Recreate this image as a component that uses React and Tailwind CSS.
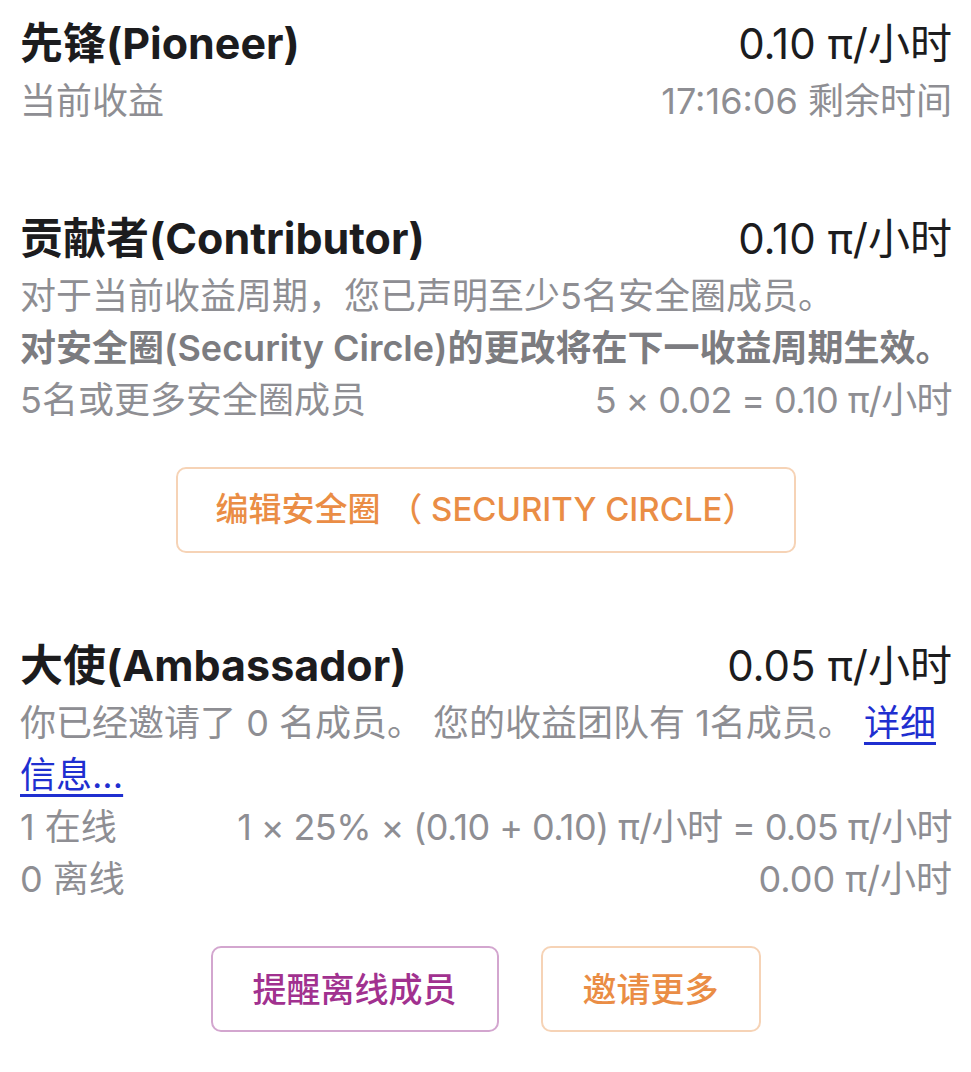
import React from 'react';

const font = { fontFamily: '"Inter", "Noto Sans CJK SC", sans-serif' };

function TitleRow({ title, value }) {
  return (
    <div className="flex items-center justify-between h-[64px]">
      <span className="text-[43px] font-bold text-[#1c1c1e]">{title}</span>
      <span className="text-[42px] text-[#1c1c1e]">{value}</span>
    </div>
  );
}

function InfoRow({ left, right, tight }) {
  return (
    <div className="flex items-center justify-between h-[52px] text-[36px] text-[#8e8e93]">
      <span>{left}</span>
      <span className={tight ? 'tracking-[-0.6px]' : ''}>{right}</span>
    </div>
  );
}

export default function App() {
  return (
    <div className="w-[971px] h-[1072px] bg-white pl-[20px] pr-[19px] pt-[11px]" style={font}>
      {/* Pioneer */}
      <TitleRow title="先锋(Pioneer)" value="0.10 π/小时" />
      <InfoRow left="当前收益" right="17:16:06 剩余时间" />

      {/* Contributor */}
      <div className="mt-[79px]">
        <TitleRow title="贡献者(Contributor)" value="0.10 π/小时" />
        <div className="h-[52px] leading-[52px] text-[36px] text-[#8e8e93]">
          对于当前收益周期，您已声明至少5名安全圈成员。
        </div>
        <div className="h-[52px] leading-[52px] text-[36px] font-semibold text-[#7c7c80] whitespace-nowrap">
          对安全圈(Security Circle)的更改将在下一收益周期生效。
        </div>
        <InfoRow left="5名或更多安全圈成员" right="5 × 0.02 = 0.10 π/小时" tight />
        <div className="flex justify-center mt-[41px] pr-[1px]">
          <button className="w-[620px] h-[86px] rounded-[10px] border-2 border-[#f6d3b6] text-[33px] font-medium text-[#ea8d45]">
            编辑安全圈 （ SECURITY CIRCLE）
          </button>
        </div>
      </div>

      {/* Ambassador */}
      <div className="mt-[80px]">
        <TitleRow title="大使(Ambassador)" value="0.05 π/小时" />
        <div className="leading-[52px] text-[36px] text-[#8e8e93]">
          你已经邀请了 0 名成员。 您的收益团队有 1名成员。{' '}
          <a href="#" className="text-[#1f2fd0] underline underline-offset-[6px]">
            详细信息...
          </a>
        </div>
        <InfoRow left="1 在线" right="1 × 25% × (0.10 + 0.10) π/小时 = 0.05 π/小时" tight />
        <InfoRow left="0 离线" right="0.00 π/小时" />
        <div className="flex justify-center gap-[42px] mt-[41px] pr-[1px]">
          <button className="w-[288px] h-[86px] rounded-[10px] border-2 border-[#d3a6cf] text-[34px] font-medium text-[#a1318f]">
            提醒离线成员
          </button>
          <button className="w-[220px] h-[86px] rounded-[10px] border-2 border-[#f6d3b6] text-[34px] font-medium text-[#ea8d45]">
            邀请更多
          </button>
        </div>
      </div>
    </div>
  );
}
